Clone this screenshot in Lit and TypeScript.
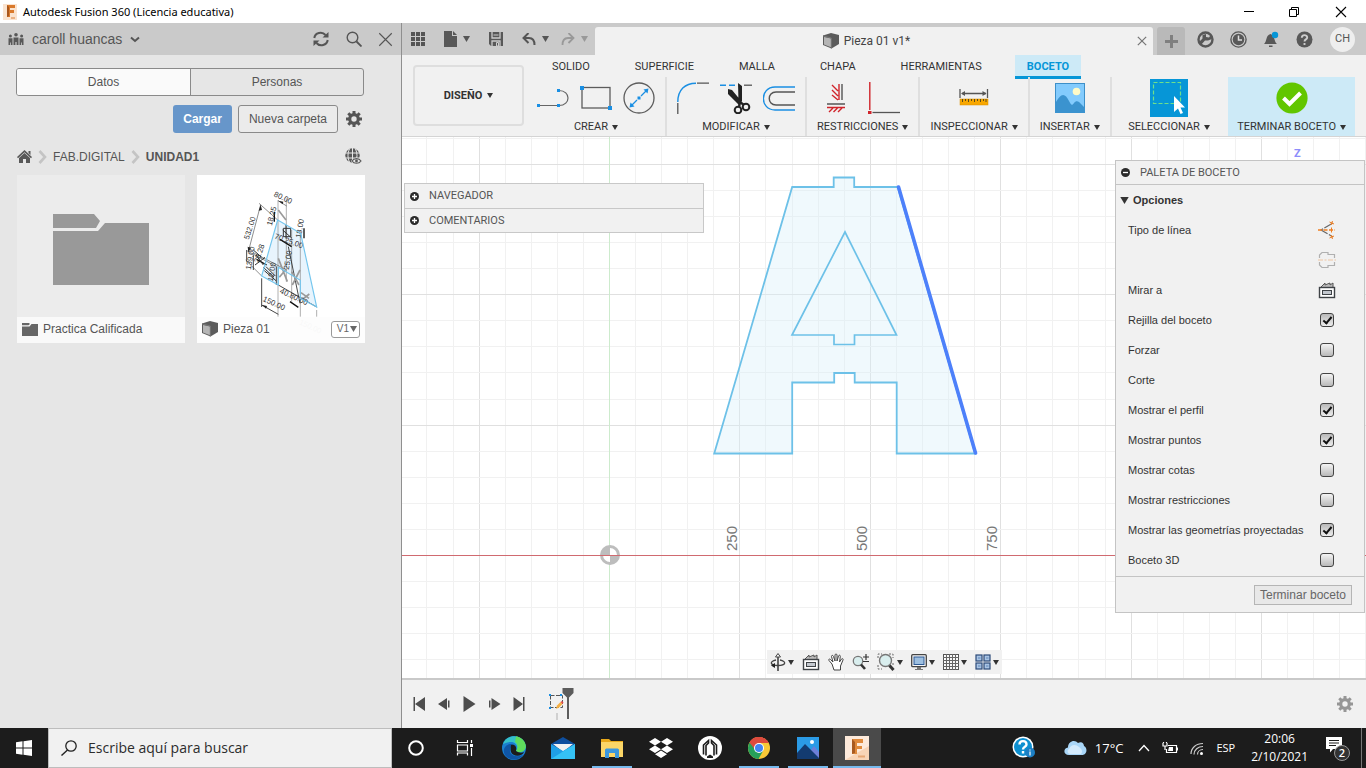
import { LitElement, html, svg, css, nothing } from "lit";
import type { TemplateResult } from "lit";
import { customElement, state } from "lit/decorators.js";
import { classMap } from "lit/directives/class-map.js";

/** Wraps vector content in a fixed-size svg element. */
const icon = (w: number, h: number, body: unknown, box = `0 0 ${w} ${h}`) =>
  html`<svg width=${w} height=${h} viewBox=${box} fill="none" aria-hidden="true">${body}</svg>`;

const caret = (w = 6, h = 5) => icon(w, h, svg`<path d="M0 0H6L3 5Z" fill="currentColor"/>`, "0 0 6 5");

const gear = (size: number) =>
  icon(size, size, svg`
    <circle cx="8" cy="8" r="4.3" stroke="currentColor" stroke-width="3.2"/>
    <g stroke="currentColor" stroke-width="3">
      <path d="M8 0V3M8 13V16M0 8H3M13 8H16M2.3 2.3L4.4 4.4M11.6 11.6L13.7 13.7M2.3 13.7L4.4 11.6M11.6 4.4L13.7 2.3"/>
    </g>`, "0 0 16 16");

const cube = icon(16, 16, svg`
  <path d="M0 2.5L8 0L16 2V11L8.5 15.5L0 12Z" fill="#5c5c5c"/>
  <path d="M1 4L8 5.5V14.3L1 11.5Z" fill="#b5b5b5"/>
  <path d="M0 2.8L8.3 5V15.5" stroke="#777" stroke-width="1"/>`);

const lookAt = icon(18, 18, svg`
  <path d="M3 6L7 2V4L12 2V4L15 2V6" fill="#bbb" stroke="#555" stroke-width="1"/>
  <rect x="1.5" y="6.5" width="15" height="10" fill="#fff" stroke="#3f4347" stroke-width="1.4"/>
  <rect x="4.5" y="9.5" width="9" height="4" fill="#c3c8cf" stroke="#3f4347"/>`);

const fusionLogo = icon(14, 16, svg`
  <rect width="14" height="16" fill="#fae3cf"/>
  <path d="M4 1H12V4H7V6H11V9H7V13H4Z" fill="#d9792b"/>
  <path d="M4 1L6 3V12L4 13Z" fill="#a9561b"/>
  <path d="M8 14H12" stroke="#e6a06a" stroke-width="1.5"/>`);

const people = icon(16, 12, svg`
  <g fill="#585858"><circle cx="8" cy="1.8" r="1.8"/><circle cx="2.4" cy="3" r="1.5"/><circle cx="13.6" cy="3" r="1.5"/>
  <path d="M5.5 4.5H10.5V12H8.6V9H7.4V12H5.5ZM.5 5.3H4.5V12H3V9.5H2.2V12H.5ZM11.5 5.3H15.5V12H13.8V9.5H13V12H11.5Z"/></g>`);

const refresh = icon(18, 16, svg`
  <path d="M2.3 7A6.3 6 0 0 1 13.5 4M15.7 9A6.3 6 0 0 1 4.5 12" stroke="#555" stroke-width="2"/>
  <path d="M16.5 1V6.5H10.5ZM1.5 15V9.5H7.5Z" fill="#555"/>`);

const lens = (size: number, color: string, width: number) =>
  icon(size, size, svg`<circle cx="6.5" cy="6.5" r="5.3" stroke=${color} stroke-width=${width}/>
    <path d="M10.5 10.5L15.5 15.5" stroke=${color} stroke-width=${width + 0.4}/>`, "0 0 16 16");

const cross = (size: number, color: string, width: number) =>
  icon(size, size, svg`<path d="M1 1L11 11M11 1L1 11" stroke=${color} stroke-width=${width}/>`, "0 0 12 12");

const crumbArrow = icon(9, 14, svg`<path d="M1.5 1L7 7L1.5 13" stroke="#c4c4c4" stroke-width="2.6"/>`);

const home = icon(15, 13, svg`
  <path d="M7.5 0L15 7L14 8.2L7.5 2.2L1 8.2L0 7ZM11.5 1H13.5V5L11.5 3Z" fill="#585858"/>
  <path d="M2 8L7.5 3L13 8V13H9V9H6V13H2Z" fill="#585858"/>`);

const globe = icon(17, 17, svg`
  <circle cx="7.5" cy="7.5" r="7.2" fill="#585858"/>
  <path d="M0 5H15M0 10H15M7.5 0V15M4.5 1C2.5 5 2.5 10 4.5 14M10.5 1C12.5 5 12.5 10 10.5 14" stroke="#e7e7e7" stroke-width="1"/>
  <path d="M6 13C8 8.5 15 8.5 17 13C15 17.3 8 17.3 6 13Z" fill="#e7e7e7"/>
  <path d="M7 13C9 9.8 14 9.8 16 13C14 16 9 16 7 13Z" stroke="#585858" stroke-width="1.2"/>
  <circle cx="11.5" cy="13" r="1.4" fill="#585858"/>`);

const bigFolder = icon(96, 72, svg`
  <path d="M0 0H41L47 7L43 14H0ZM0 17H45L52 9H96V71H0Z" fill="#999"/>`);

const smallFolder = icon(16, 13, svg`<path d="M0 0H7L8 1L6.5 2.3H0ZM0 3.5H7.5L9.5 1H16V13H0Z" fill="#666"/>`);

const dim = (x: number, y: number, angle: number, text: string, fill = "#333") =>
  svg`<text transform="translate(${x} ${y}) rotate(${angle})" font-size="23" font-family="Liberation Sans, sans-serif" fill=${fill}>${text}</text>`;

const thumbnail = html`<svg class="thumb" viewBox="591 15 504 504" fill="none" role="img" aria-label="Pieza 01">
  <path d="M833 150L902 190L950 411L901 385V331L835 292V345L785 318Z" fill="#e8f4fd"/>
  <g stroke="#555" stroke-width="2">
    <path d="M834 90V440M859 85V335M875 180V395M901 180V440M950 420V440" stroke="#888"/>
    <path d="M834 92L860 108M782 104L745 245M777 100L833 150M742 243L830 290M760 248L860 300M737 270L785 318"/>
    <path d="M740 240V275M760 255V300M829 290V345M785 325V411M785 405L835 433M865 230L900 400M835 345L950 411" stroke="#222" stroke-width="2.5"/>
    <path d="M823 125V155M912 175V205M840 208L875 230M770 268L800 285M870 395L895 412" stroke="#111" stroke-width="4"/>
    <path d="M835 265L862 335M838 322L856 300M875 305L897 345M877 345L900 300M903 368L927 385M905 390L928 372M835 120L858 150" stroke="#9a9a9a" stroke-width="5"/>
    <path d="M850 175H872V200H850ZM858 165V205M768 255L790 285M765 285L795 262M790 292L822 322M793 302L828 332M798 290L826 318M848 180L876 205M760 240L785 262" stroke="#333" stroke-width="3"/>
  </g>
  <path d="M782 104L776 122L786 120ZM835 92L848 103L850 95ZM745 247L743 230L753 234ZM787 405L798 416L801 408Z" fill="#222"/>
  ${dim(820, 78, 25, "80.00")}${dim(746, 210, -72, "532.00")}${dim(815, 168, -75, "18.25")}
  ${dim(902, 205, -80, "18.00")}${dim(822, 205, 20, "70.25.00")}${dim(752, 300, -80, "139.00")}
  ${dim(866, 300, -80, "25.00")}${dim(787, 392, 25, "150.00")}${dim(838, 368, 25, "40.80.00")}
  ${dim(776, 280, -72, "28.28")}${dim(818, 335, -80, "12.00")}${dim(896, 462, 25, "150.00", "#e4e4e4")}
  <path d="M833 150L902 190L950 411L901 385V331L835 292V345L785 318Z" stroke="#74c6ee" stroke-width="3.5"/>
</svg>`;

const blue = "#1a8fe3";

const lineTool = icon(32, 32, svg`
  <path d="M2 23.5H21M22 8.5C34 8.5 34 23.5 22 23.5" stroke="#666" stroke-width="1.2"/>
  <path d="M0 22H3V25H0ZM20 22H23V25H20ZM20 7H23V10H20Z" fill=${blue}/>`);
const rectTool = icon(32, 32, svg`
  <rect x="2" y="5.5" width="28" height="20.5" stroke="#5c5c5c" stroke-width="1.3"/>
  <path d="M0 4H4V8H0ZM28 24H32V28H28Z" fill=${blue}/>`);
const circleTool = icon(32, 32, svg`
  <circle cx="16" cy="16" r="15" stroke="#5c5c5c" stroke-width="1.3"/>
  <path d="M8 24L14 18M18 14L24 8" stroke=${blue} stroke-width="1.3"/>
  <path d="M6.5 25.5L7.5 20.5L11.5 24.5ZM25.5 6.5L24.5 11.5L20.5 7.5ZM14.5 14.5H17.5V17.5H14.5Z" fill=${blue}/>`);
const filletTool = icon(32, 32, svg`
  <path d="M.8 20C.8 8 8 1.2 19 1.2" stroke=${blue} stroke-width="1.4"/>
  <path d="M.8 21V32M20 1.2H32" stroke="#555" stroke-width="1.3"/>`);
const trimTool = icon(32, 32, svg`
  <path d="M0 3.2H18" stroke=${blue} stroke-width="1.4" stroke-dasharray="6 3"/><path d="M24 3.2H32" stroke="#555" stroke-width="1.3"/>
  <path d="M18 1L22 4V19L18.5 20ZM8 7L12 8L22 20L19 23L8 12Z" fill="#222"/>
  <circle cx="18" cy="28" r="3.3" stroke="#222" stroke-width="2"/><circle cx="26" cy="25" r="3.3" stroke="#222" stroke-width="2"/>
  <path d="M19 25L20 20L24 23" stroke="#222" stroke-width="2.4"/>`);
const offsetTool = icon(32, 32, svg`
  <path d="M32 5H12C-3.5 5 -3.5 28 12 28H32" stroke=${blue} stroke-width="1.4"/>
  <path d="M32 10H13C4 10 4 23 13 23H32" stroke="#555" stroke-width="1.4"/>`);
const fixTool = icon(32, 32, svg`
  <path d="M14 2V18M7 3L13 9M7 8L13 14M7 13L13 18M4 30L8 26M8.500 30L12.500 26M13 30L17 26M2 25.500H20" stroke="#d0242b" stroke-width="1.4"/>
  <path d="M17 2V18M2 22H20" stroke="#555" stroke-width="1.4"/>`);
const cornerTool = icon(32, 32, svg`
  <path d="M1.800 0V28" stroke="#d0242b" stroke-width="1.400"/><path d="M0 29H3.500V32H0Z" fill="#d0242b"/>
  <path d="M4.500 30.500H32" stroke="#555" stroke-width="1.300"/>`);
const measureTool = icon(32, 32, svg`
  <path d="M2 7V16M29.500 7V16M4 11.500H28" stroke="#555" stroke-width="1.300"/>
  <path d="M3 11.500L7 9V14ZM28.500 11.500L24.500 9V14Z" fill="#555"/>
  <rect x="2" y="17" width="28" height="6" fill="#f8a700" stroke="#d98e00" stroke-width=".5"/>
  <path d="M4.500 17V20M7.500 17V19M10.500 17V20M13.500 17V19M16.500 17V20M19.500 17V19M22.500 17V20M25.500 17V19M28 17V20" stroke="#5b4a1c"/>`);
const imageTool = icon(30, 30, svg`
  <rect x=".5" y=".5" width="29" height="29" fill="#83cbfd" stroke="#3d8fc8"/>
  <circle cx="21.500" cy="8.500" r="3.800" fill="#fffbc8"/>
  <path d="M0 21C6 9 10 10 14 18C16 22 17 23 19 20C21 17 24 18 26 21L30 25V30H0Z" fill="#3b93cf"/>`);
const selectTool = icon(38, 38, svg`
  <rect width="38" height="38" fill="#0696d7"/>
  <rect x="3.500" y="3.500" width="27" height="21" stroke="#6fe08a" stroke-width="1.200" stroke-dasharray="4 2"/>
  <path d="M24 17V33L28 29.500L30.500 35L33 34L30.500 28.500H35Z" fill="#fff"/>`);
const finishTool = icon(32, 32, svg`
  <circle cx="16" cy="16" r="15.600" fill="#62c600"/><path d="M7.500 16L13.500 22L24.500 11" stroke="#fff" stroke-width="4"/>`);

const ribbonTabs = ["SOLIDO", "SUPERFICIE", "MALLA", "CHAPA", "HERRAMIENTAS", "BOCETO"];
const ribbonGroups: { label: string; icons: TemplateResult[]; finish?: boolean }[] = [
  { label: "CREAR", icons: [lineTool, rectTool, circleTool] },
  { label: "MODIFICAR", icons: [filletTool, trimTool, offsetTool] },
  { label: "RESTRICCIONES", icons: [fixTool, cornerTool] },
  { label: "INSPECCIONAR", icons: [measureTool] },
  { label: "INSERTAR", icons: [imageTool] },
  { label: "SELECCIONAR", icons: [selectTool] },
  { label: "TERMINAR BOCETO", icons: [finishTool], finish: true },
];

const quickIcons = {
  apps: icon(14, 14, svg`<path d="M0 0H4V4H0ZM5 0H9V4H5ZM10 0H14V4H10ZM0 5H4V9H0ZM5 5H9V9H5ZM10 5H14V9H10ZM0 10H4V14H0ZM5 10H9V14H5ZM10 10H14V14H10Z" fill="#555"/>`),
  file: icon(13, 16, svg`<path d="M0 0H8V5H13V16H0ZM9 0L13 4H9Z" fill="#585858"/>`),
  save: icon(14, 14, svg`<path d="M0 0H14V14H2L0 12Z" fill="#585858"/><path d="M3 0V6H11V0M3 14V9H11V14" stroke="#ccc" stroke-width="1.300"/><path d="M4.500 3H9.500M7.500 10.500H9.500V14H7.500Z" stroke="#ccc"/>`),
  undo: icon(14, 13, svg`<path d="M2 5H7C11 5 12.500 7.500 12.500 12" stroke="#555" stroke-width="2"/><path d="M6.500 0L1.500 5L6.500 10" stroke="#555" stroke-width="2"/>`),
  redo: icon(14, 13, svg`<path d="M12 5H7C3 5 1.500 7.500 1.500 12" stroke="#999" stroke-width="1.800"/><path d="M7.500 0L12.500 5L7.500 10" stroke="#999" stroke-width="1.800"/>`),
};

const statusIcons: [string, TemplateResult][] = [
  ["Extensiones", icon(17, 17, svg`<circle cx="8.500" cy="8.500" r="7" stroke="#585858" stroke-width="2.400"/><path d="M2 11L5.500 7.500V4L9 3V6L12 6.500L14 3.500L15 8L11 9.500H8L4 14Z" fill="#585858"/>`)],
  ["Estado del trabajo", icon(17, 17, svg`<circle cx="8.500" cy="8.500" r="7.600" stroke="#585858" stroke-width="1.400"/><circle cx="8.500" cy="8.500" r="5.800" fill="#585858"/><path d="M8.500 4.500V9H12" stroke="#ddd" stroke-width="1.500"/>`)],
  ["Notificaciones", icon(17, 17, svg`<path d="M1 13C4 11 2.500 4 7.500 3C12 4 11 11 14 13ZM6 14.500H9.500V16H6Z" fill="#585858"/><circle cx="12" cy="4" r="3.200" fill="#0696d7"/>`)],
  ["Ayuda", icon(17, 17, svg`<circle cx="8.500" cy="8.500" r="8" fill="#585858"/><path d="M5.800 6.700C5.800 3.300 11.200 3.300 11.200 6.500C11.200 8.500 8.500 8.300 8.500 10.500M8.500 12V14" stroke="#ccc" stroke-width="1.900"/>`)],
];

const navIcons: [string, TemplateResult, boolean][] = [
  ["Órbita", icon(16, 18, svg`<path d="M8 3V18" stroke="#444" stroke-width="1.600"/><path d="M8 .5L10.500 4H5.500Z" fill="#fff" stroke="#444"/><path d="M6 7C-1 8.500 0 12.500 8 12.500C16 12.500 17 8.500 10 7" stroke="#444" stroke-width="1.300"/><path d="M5 10V15L1 12.500Z" fill="#222"/>`), true],
  ["Mirar a", lookAt, false],
  ["Encuadre", icon(16, 18, svg`<path d="M4 11L1 7.500C0 6 2 5.500 3 7L5 9L3.500 3.500C3.500 2 5 2 5.500 3.500L7 8V2C7 .7 9 .7 9 2V8L10.500 3C11 1.700 12.500 2 12.300 3.500L11.500 9L13.500 6C14.500 5 15.500 6 15 7L12.500 13V17H6Z" fill="#fff" stroke="#444"/>`), false],
  ["Zoom", icon(17, 18, svg`<circle cx="6" cy="8" r="4.700" fill="#d9eeee" stroke="#777" stroke-width="1.300"/><path d="M9 11.500L13 16" stroke="#333" stroke-width="2.600"/><path d="M14 1V7M11 4H17M11 8.500H17" stroke="#333" stroke-width="1.200"/>`), false],
  ["Ajustar", icon(18, 18, svg`<path d="M1 5V1H5M12 1H16V5M1 12V16H5M16 10V13" stroke="#666" stroke-dasharray="2 1.500"/><circle cx="8.500" cy="7.500" r="6" fill="#d9eeee" stroke="#777" stroke-width="1.400"/><path d="M12.500 12.500L16.500 17" stroke="#333" stroke-width="3"/>`), true],
  ["Visualización", icon(16, 18, svg`<rect x=".7" y="1.700" width="14.600" height="12" rx="1" fill="#f6f6f6" stroke="#444" stroke-width="1.300"/><rect x="3" y="4" width="10" height="7.500" fill="#9dbfe0" stroke="#2f5b95"/><path d="M6 14H10V16H12V17H4V16H6Z" fill="#777"/>`), true],
  ["Rejilla", icon(16, 18, svg`<rect x=".5" y="1.500" width="15" height="15" fill="#fff" stroke="#555"/><path d="M3.500 1V17M6.500 1V17M9.500 1V17M12.500 1V17M0 4.500H16M0 7.500H16M0 10.500H16M0 13.500H16" stroke="#666" stroke-width="1.100"/>`), true],
  ["Ventanas", icon(16, 18, svg`<g fill="#a9c4e4" stroke="#2c4a78" stroke-width="1.200"><rect x="1" y="2" width="6" height="6"/><rect x="9" y="2" width="6" height="6"/><rect x="1" y="10" width="6" height="6"/><rect x="9" y="10" width="6" height="6"/></g><path d="M3 5H5.500M11 5H13.500M3 13H5.500M11 13H13.500" stroke="#5f86b8"/>`), true],
];

const playback: [string, string][] = [
  ["Ir al inicio", "M1.500 1V15H3V8L13 15V1L3 8V1Z"],
  ["Paso atrás", "M1 8L10 2V14ZM11 4.500H12.500V11.500H11Z"],
  ["Reproducir", "M1.500 0L13.500 8L1.500 16Z"],
  ["Paso adelante", "M13.500 8L4.500 2V14ZM2 4.500H3.500V11.500H2Z"],
  ["Ir al final", "M1.500 1L11 8V1H12.500V15H11V8L1.500 15Z"],
];

const lineType = icon(18, 18, svg`
  <path d="M15 2L3 9L15 16" stroke="#666" stroke-width="1.200" stroke-dasharray="10 1.500"/>
  <path d="M0 9H17" stroke="#f07f22" stroke-width="1.400" stroke-dasharray="4 1.500"/>
  <path d="M13.500 6.500V11.500M11.500 1L16 3M14.500 0L13 4M11.500 17L16 15M14.500 18L13 14" stroke="#f07f22"/>`);
const centerLine = icon(18, 18, svg`
  <path d="M1.500 7V4L4 1.500H10V3.500H16.500V7M1.500 11V14L4 16.500H10V14.500H16.500V11" stroke="#b0b0b0" stroke-width="1.200"/>
  <path d="M0 9H18" stroke="#f0c6a2" stroke-width="1.200" stroke-dasharray="5 1.500 2 1.500"/>`);

const options: { name: string; checked: boolean }[] = [
  { name: "Rejilla del boceto", checked: true },
  { name: "Forzar", checked: false },
  { name: "Corte", checked: false },
  { name: "Mostrar el perfil", checked: true },
  { name: "Mostrar puntos", checked: true },
  { name: "Mostrar cotas", checked: false },
  { name: "Mostrar restricciones", checked: false },
  { name: "Mostrar las geometrías proyectadas", checked: true },
  { name: "Boceto 3D", checked: false },
];

const toggleDot = (open: boolean) =>
  icon(9, 9, svg`<circle cx="4.500" cy="4.500" r="4.500" fill="#2b2b2b"/><path d=${open ? "M2 4.500H7" : "M2 4.500H7M4.500 2V7"} stroke="#fff" stroke-width="1.300"/>`);

/** Drawing plane: origin marker, 50-unit grid, sketch profile. One grid cell is 26.08 px. */
@customElement("sketch-canvas")
export class SketchCanvas extends LitElement {
  static styles = css`
    :host { display: block; overflow: hidden; background: #fff; }
    svg { display: block; width: 100%; height: 100%; }
    .minor { stroke: #f1f1f1; }
    .major { stroke: #e0e0e0; }
    .tick { font: 15px "Liberation Sans", Arial, sans-serif; fill: #777; }
    .axis { font: bold 11px Roboto, sans-serif; fill: #8d8dfb; }
  `;
  render() {
    const cell = 26.08;
    const range = (a: number, b: number) => Array.from({ length: b - a + 1 }, (_, i) => a + i);
    const ordered = (a: number, b: number) => range(a, b).sort((p, q) => Number(p % 5 === 0) - Number(q % 5 === 0));
    return html`<svg fill="none" role="img" aria-label="Boceto">
      <g transform="translate(208 418)">
        <g shape-rendering="crispEdges">
          ${ordered(-16, 60).map((i) => svg`<path class=${i % 5 ? "minor" : "major"} d="M${i * cell - 0.5} -900V900"/>`)}
          ${ordered(-30, 20).map((i) => svg`<path class=${i % 5 ? "minor" : "major"} d="M-900 ${i * cell + 0.5}H2400"/>`)}
          <path d="M-.5 -900V900" stroke="#cdebcd"/>
        </g>
        <path d="M182.500 -368H224V-377.500H244.500V-368H288L365.500 -101.500H287V-172.500H245V-182H224.500V-172.500H182.500V-101.500H104.500Z"
          transform="translate(-.3 0)" fill="#d9f0fb" fill-opacity=".4" stroke="#6dc1e8" stroke-width="1.800"/>
        <path d="M235 -323L286.500 -220H244.500V-210.500H224V-220H182Z" stroke="#6dc1e8" stroke-width="1.700"/>
        <path d="M288.500 -368L365.500 -102" stroke="#4d80fa" stroke-width="3.600" stroke-linecap="round"/>
        <circle r="8.500" stroke="#bdbdbd" stroke-width="3" fill="#fff"/>
        <path d="M0 0H8V0A8 8 0 0 1 0 8ZM0 0H-8A8 8 0 0 1 0 -8Z" fill="#bdbdbd"/>
        <path d="M-900 .5H2400" stroke="#d06a70" shape-rendering="crispEdges"/>
        ${[250, 500, 750].map((n, i) => svg`<text class="tick" transform="translate(${127 + i * 130} -4) rotate(-90)">${n}</text>`)}
        <text class="axis" x="684" y="-398">Z</text>
      </g>
    </svg>`;
  }
}

@customElement("sketch-palette")
export class SketchPalette extends LitElement {
  static styles = css`
    :host { display: block; box-sizing: border-box; border: 1px solid #c4c4c4; background: #f1f1f1; color: #333;
      font: 11px/16px "Liberation Sans", Arial, sans-serif; }
    .head { display: flex; align-items: center; gap: 10px; height: 23px; padding: 0 5px; border-bottom: 1px solid #c4c4c4;
      font: 11px/16px Roboto, sans-serif; color: #555; }
    .section { display: flex; align-items: center; gap: 4px; height: 30px; padding: 0 4px; font-weight: bold; }
    .row { display: flex; align-items: center; justify-content: space-between; height: 30px; padding: 0 28px 0 12px; }
    .row.blank { justify-content: flex-end; }
    svg { display: block; flex: none; }
    button { border: 0; background: none; padding: 0; margin: 0; font: inherit; color: inherit; }
    input { appearance: none; display: grid; place-items: center; box-sizing: border-box; width: 14px; height: 14px; margin: 0 2px;
      border: 1px solid #444; border-radius: 3px; background: linear-gradient(#f4f4f4, #b9b9b9); }
    input:checked { background: linear-gradient(#b9b9b9, #ededed); }
    input:checked::before { content: ""; width: 3px; height: 7px; border: solid #111; border-width: 0 2px 2px 0;
      transform: rotate(40deg); margin-bottom: 2px; }
    .foot { display: flex; justify-content: flex-end; margin-top: 1px; padding: 8px 12px 7px; border-top: 1px solid #c4c4c4; }
    .foot button { border: 1px solid #b5b5b5; background: #e8e8e8; color: #666; padding: 0 5px; font-size: 12px; line-height: 18px; }
  `;
  render() {
    return html`
      <div class="head">${toggleDot(true)}<span>PALETA DE BOCETO</span></div>
      <div class="section">${caret(9, 7)}<span>Opciones</span></div>
      <div class="row"><span>Tipo de línea</span><button aria-label="Construcción">${lineType}</button></div>
      <div class="row blank"><button aria-label="Línea de centro">${centerLine}</button></div>
      <div class="row"><span>Mirar a</span><button aria-label="Mirar a">${lookAt}</button></div>
      ${options.map((o, i) => html`<div class="row">
        <label for="opt${i}">${o.name}</label><input id="opt${i}" type="checkbox" .checked=${o.checked} /></div>`)}
      <div class="foot"><button>Terminar boceto</button></div>`;
  }
}

@customElement("data-panel")
export class DataPanel extends LitElement {
  static styles = css`
    :host { display: flex; flex-direction: column; box-sizing: border-box; background: #e6e6e6; border-right: 1px solid #8f8f8f;
      color: #555; font: 12px/16px "Liberation Sans", Arial, sans-serif; }
    svg { display: block; flex: none; }
    button { border: 0; background: none; padding: 0; margin: 0; font: inherit; color: inherit; }
    a { color: inherit; text-decoration: none; }
    .head { display: flex; align-items: center; gap: 16px; height: 32px; padding: 0 8px; background: #cacaca; }
    .team { display: flex; align-items: center; gap: 8px; margin-right: auto; font-size: 14px; }
    .body { display: flex; flex-direction: column; padding: 13px 37px 0 16px; }
    .tabs { display: grid; grid-template-columns: 1fr 1fr; border: 1px solid #8a8a8a; border-radius: 3px; overflow: hidden; }
    .tabs button { height: 26px; }
    .tabs button + button { border-left: 1px solid #8a8a8a; }
    .tabs .on { background: #fafafa; }
    .actions { display: flex; align-items: center; justify-content: flex-end; gap: 6px; padding: 9px 2px 0 0; }
    .upload { height: 28px; padding: 0 10px; border-radius: 3px; background: #6796ca; color: #fff; font-weight: bold; }
    .folder { height: 28px; padding: 0 10px; border: 1px solid #8a8a8a; border-radius: 3px; background: #ebebeb; }
    .gear { margin-left: 2px; }
    .crumbs { display: flex; align-items: center; gap: 6px; padding: 15px 2px 10px 1px; }
    .crumbs .globe { margin-left: auto; }
    .cards { display: grid; grid-template-columns: 168px 168px; gap: 12px; padding-left: 1px; }
    .card { display: grid; grid-template-rows: 142px 26px; background: #ececec; }
    .pic { grid-area: 1 / 1; display: grid; place-items: center; padding-top: 7px; }
    .part { background: #fff; }
    .part .pic { grid-area: 1 / 1 / 3 / 2; padding: 0; }
    .thumb { width: 168px; height: 168px; }
    .foot { grid-area: 2 / 1; display: flex; align-items: center; gap: 5px; padding: 0 5px 2px; background: #fdfdfdcc; }
    .version { display: flex; align-items: center; gap: 1px; height: 17px; margin-left: auto; padding: 0 2px 0 5px; border: 1px solid #999;
      border-radius: 3px; background: #fff; font-size: 10px; color: #666; }
  `;
  render() {
    return html`
      <div class="head">
        <button class="team">${people}<span>caroll huancas</span>${icon(10, 7, svg`<path d="M1 1.500L5 5L9 1.500" stroke="#555" stroke-width="2"/>`)}</button>
        <button aria-label="Actualizar">${refresh}</button>
        <button aria-label="Buscar">${lens(16, "#555", 1.4)}</button>
        <button aria-label="Cerrar">${cross(15, "#555", 0.9)}</button>
      </div>
      <div class="body">
        <div class="tabs"><button class="on">Datos</button><button>Personas</button></div>
        <div class="actions">
          <button class="upload">Cargar</button><button class="folder">Nueva carpeta</button>
          <button class="gear" aria-label="Configuración">${gear(16)}</button>
        </div>
        <nav class="crumbs">
          <a href="#" aria-label="Inicio">${home}</a>${crumbArrow}<a href="#">FAB.DIGITAL</a>${crumbArrow}<b>UNIDAD1</b>
          <button class="globe" aria-label="Abrir en la web">${globe}</button>
        </nav>
        <div class="cards">
          <div class="card"><div class="pic">${bigFolder}</div><div class="foot">${smallFolder}<span>Practica Calificada</span></div></div>
          <div class="card part"><div class="pic">${thumbnail}</div>
            <div class="foot">${cube}<span>Pieza 01</span><button class="version">V1${caret(7, 6)}</button></div></div>
        </div>
      </div>`;
  }
}

const taskApps: { name: string; mark: TemplateResult; open?: boolean; active?: boolean }[] = [
  { name: "Cortana", mark: icon(24, 24, svg`<circle cx="12" cy="12" r="6.800" stroke="#fff" stroke-width="2"/>`) },
  { name: "Vista de tareas", mark: icon(24, 24, svg`<path d="M4.500 4V6.500H14.500V4M4.500 19.500V17H14.500V19.500M4.500 9H14.500V15H4.500ZM18.500 4V7M18.500 12V20" stroke="#fff" stroke-width="1.200"/><path d="M17 8H20V11H17Z" fill="#fff"/>`) },
  { name: "Edge", mark: icon(24, 24, svg`<circle cx="12" cy="12" r="12" fill="#1a7fd0"/><path d="M1 8C4 -2 20 -3 23.500 9C25 15 18 18 14 15C17 11 14 6 9 6C5 6 2 8 1 8Z" fill="#35c1c8"/><path d="M14 .3C20 1 25 7 23.500 12C22 17 16 17 14 15C17 11 15 7 13 6Z" fill="#5fdc5c"/><path d="M8 13C7 19 13 22 21 19C17 25 7 25 3 19C0 14 3 9 8 8C11 8 12 9 12 10C10 10 8.500 11 8 13Z" fill="#0f55a5"/><path d="M9 9C13 8 15 11 14 15C17 17 20 17 22 16C20 21 11 21 9 16C8 13 9 11 9 9Z" fill="#1c1c1c"/>`) },
  { name: "Correo", mark: icon(24, 24, svg`<path d="M0 8L12 1L24 8V12H0Z" fill="#0f4f9e"/><path d="M2 8H22L12 16Z" fill="#f2f2f2"/><path d="M0 8L12 15L24 8V23H0Z" fill="#1f9fe6"/><path d="M0 23L24 8V23Z" fill="#35c2f5"/>`) },
  { name: "Explorador", open: true, mark: icon(24, 24, svg`<path d="M1 3H9L11 5H23V20H1Z" fill="#e9a91a"/><path d="M1 6H23V21H1Z" fill="#fbd667"/><path d="M5 22V14C5 13 6 12.500 7 12.500H17C18 12.500 19 13 19 14V22H15V17H9V22Z" fill="#3c98dd"/>`) },
  { name: "Dropbox", mark: icon(24, 24, svg`<path d="M6 2L12 5.700L6 9.500L0 5.700ZM18 2L24 5.700L18 9.500L12 5.700ZM6 9.500L12 13.300L6 17L0 13.300ZM18 9.500L24 13.300L18 17L12 13.300ZM12 14.500L18 18.300L12 22L6 18.300Z" fill="#fff"/>`) },
  { name: "Lector", mark: icon(24, 24, svg`<circle cx="12" cy="12" r="12" fill="#fff"/><path d="M5.500 18.500V9L10.500 4.500V7L8 9.500V19.500M18.500 18.500V9L13.500 4.500V7L16 9.500V19.500" stroke="#1c1c1c" stroke-width="1.600"/><path d="M9 22V20.500L12 18.500L15 20.500V22" fill="#1c1c1c"/>`) },
  { name: "Chrome", open: true, mark: icon(24, 24, svg`<circle cx="12" cy="12" r="11" fill="#f8c937"/><path d="M12 12L2.500 6.500A11 11 0 0 1 21.700 7H12Z" fill="#dd4b3e"/><path d="M12 12L2.500 6.500A11 11 0 0 0 11.500 23L16 15Z" fill="#26a05a"/><path d="M12 7H21.700A11 11 0 0 0 2.500 6.500L7.500 13Z" fill="#dd4b3e"/><circle cx="12" cy="12" r="5" fill="#fff"/><circle cx="12" cy="12" r="4" fill="#4285f4"/>`) },
  { name: "Fotos", open: true, mark: icon(24, 24, svg`<rect x="1" y="1" width="22" height="22" fill="#2b9be6"/><path d="M14 15L18 10L23 16V23H14Z" fill="#6d7fd8"/><path d="M1 17L9 8L23 22V23H1Z" fill="#133b70"/><circle cx="16" cy="6" r="2" fill="#fff"/>`) },
  { name: "Fusion 360", open: true, active: true, mark: icon(24, 24, svg`<rect width="24" height="24" fill="#fdeadb"/><path d="M10 18L24 10V24H0Z" fill="#f8d4b6"/><path d="M7 3H18V7H12V10H17V13H12V18H7Z" fill="#e08a3c"/><path d="M7 3L10 6V17L7 18Z" fill="#a85a20"/><path d="M13 20.500H20" stroke="#e7a774" stroke-width="2"/>`) },
];

@customElement("task-bar")
export class TaskBar extends LitElement {
  static styles = css`
    :host { display: flex; align-items: stretch; height: 40px; background: #1c1c1c; color: #fff; font: 12px/18px "Open Sans", "Noto Sans", sans-serif; }
    svg { display: block; flex: none; }
    button { border: 0; background: none; padding: 0; margin: 0; font: inherit; color: inherit; display: grid; place-items: center; }
    .start { width: 48px; }
    .search { display: flex; align-items: center; gap: 11px; box-sizing: border-box; width: 344px; padding: 0 12px;
      border: 1px solid #bdbdbd; background: #f1f1f1; }
    .search input { flex: 1; min-width: 0; border: 0; padding: 0; background: none; outline: none; font: 14px/20px "Open Sans", "Noto Sans", sans-serif; }
    .search input::placeholder { color: #2c2c2c; opacity: 1; }
    .apps { display: flex; gap: 1px; }
    .app { width: 48px; box-sizing: border-box; padding-top: 2px; align-content: space-between; grid-template-rows: 36px 2px; }
    .line { width: 40px; height: 2px; }
    .open .line { background: #76b9ed; }
    .active { background: #4a4a4a; }
    .active .line { width: 48px; }
    .tray { display: flex; align-items: center; gap: 12px; margin-left: auto; padding-right: 4px; }
    .weather { display: flex; gap: 8px; margin: 0 3px 0 16px; }
    .weather span { font-size: 13px; }
    .clock { display: block; text-align: center; margin-left: 4px; }
    .clock time { display: block; }
    .notes { margin: 0 -2px 0 6px; }
    .peek { width: 1px; align-self: stretch; background: #777; }
    .lang { font-size: 11px; }
  `;
  render() {
    return html`
      <button class="start" aria-label="Inicio">${icon(16, 16, svg`<path d="M0 2.200L6.500 1.300V7.500H0ZM7.500 1.200L16 0V7.500H7.500ZM0 8.500H6.500V14.700L0 13.800ZM7.500 8.500H16V16L7.500 14.800Z" fill="#fff"/>`)}</button>
      <label class="search">${icon(16, 16, svg`<circle cx="10" cy="6" r="5.200" stroke="#222" stroke-width="1.300"/><path d="M6.500 10L.5 15.500" stroke="#222" stroke-width="1.400"/>`)}
        <input type="text" aria-label="Buscar" placeholder="Escribe aquí para buscar" /></label>
      <div class="apps">${taskApps.map((a) => html`
        <button class=${classMap({ app: true, open: !!a.open, active: !!a.active })} aria-label=${a.name}>${a.mark}<span class="line"></span></button>`)}
      </div>
      <div class="tray">
        <button aria-label="Ayuda">${icon(24, 24, svg`<circle cx="11" cy="11" r="10.500" fill="#fff"/><circle cx="11" cy="11" r="9" fill="#0d8fd0"/><path d="M7.500 8.500C7.500 4 14.500 4 14.500 8.500C14.500 11 11 10.500 11 13.500M11 15V17.500" stroke="#fff" stroke-width="2.400"/><circle cx="18" cy="16.500" r="5" fill="#1c7fc4"/><path d="M18 13.500V14.500M18 15.500V19.500" stroke="#fff" stroke-width="1.200"/>`)}</button>
        <button class="weather">${icon(23, 16, svg`<path d="M5 15C-1 15 -1 8 4 7.500C4 1 11 -1 14 3C18 1 20 4 20 6C24 8 23 15 18 15Z" fill="#a9d6f8"/><path d="M5 9C7 4 12 4 15 7C18 9 19 12 17 14H6C3 13 3 10 5 9Z" fill="#d4ebfd"/>`)}<span>17°C</span></button>
        <button aria-label="Iconos ocultos">${icon(12, 8, svg`<path d="M1 7L6 1.500L11 7" stroke="#fff" stroke-width="1.300"/>`)}</button>
        <button aria-label="Batería">${icon(16, 12, svg`<path d="M6 3.500H14.500V10.500H4.500V7M15.500 5.500V8.500M1 1V4H5V1M3 4V8M1.500 0V1M4.500 0V1" stroke="#fff" stroke-width="1.200"/><path d="M7 5H11V9H6Z" fill="#fff"/>`)}</button>
        <button aria-label="Red">${icon(14, 13, svg`<path d="M1 12C1 6 6 1.500 13 1.500M4 12.500C4 8 8 4.500 13 4.500M7.500 12.500C7.500 10 9.500 7.500 13 7.500" stroke="#ccc" stroke-width="1.200"/><circle cx="11.500" cy="11.500" r="1.500" fill="#fff"/>`)}</button>
        <button class="lang">ESP</button>
        <button class="clock"><time>20:06</time><time>2/10/2021</time></button>
        <button class="notes" aria-label="2 notificaciones">${icon(25, 26, svg`<g transform="translate(0 1)"><path d="M0 1H16V13H7L4 16.500V13H0Z" fill="#fff"/><path d="M3 4.500H13M3 7H13M3 9.500H10" stroke="#1c1c1c" stroke-width="1.200"/><circle cx="16" cy="17" r="7.500" fill="#333" stroke="#999"/><text x="16" y="21" text-anchor="middle" font-size="11" font-family="Open Sans, sans-serif" font-weight="600" fill="#fff">2</text></g>`)}</button>
        <span class="peek"></span>
      </div>`;
  }
}

@customElement("app-root")
export class AppRoot extends LitElement {
  @state() private tab = "BOCETO";

  static styles = css`
    :host { display: flex; flex-direction: column; height: 100vh; overflow: hidden; background: #f1f1f1; color: #333;
      font: 11px/16px Roboto, "Liberation Sans", sans-serif; }
    svg { display: block; flex: none; }
    button { border: 0; background: none; padding: 0; margin: 0; font: inherit; color: inherit; display: flex; align-items: center; justify-content: center; white-space: nowrap; }
    .title { display: flex; align-items: center; gap: 6px; height: 23px; padding: 0 19px 0 3px; background: #fff; color: #000;
      font: 11px/16px "Noto Sans", "Open Sans", sans-serif; }
    .title .win { display: flex; gap: 35px; margin-left: auto; }
    .main { flex: 1; min-height: 0; display: flex; }
    data-panel { flex: none; width: 402px; }
    .work { flex: 1; min-width: 0; display: flex; flex-direction: column; }

    .bar { display: flex; align-items: stretch; height: 32px; background: #cacaca; color: #555; }
    .quick { display: flex; align-items: center; gap: 19px; padding: 0 7px 0 9px; }
    .quick button { gap: 6px; }
    .quick .off { color: #999; }
    .quick .redo { margin-left: -7px; }
    .doc { flex: 1; display: flex; align-items: center; justify-content: center; gap: 5px; margin-top: 4px; padding: 0 6px; border-radius: 3px 3px 0 0;
      background: #f1f1f1; color: #444; font: 12px/16px Roboto, sans-serif; }
    .doc .name { display: flex; gap: 5px; margin: 0 auto; }
    .add { width: 28px; margin: 4px 0 0 4px; border-radius: 3px 3px 0 0; background: #b9b9b9; }
    .status { display: flex; align-items: center; gap: 16px; padding: 0 11px 0 12px; }
    .avatar { width: 25px; height: 25px; margin-left: 1px; border-radius: 50%; background: #eee; }

    .ribbon { display: flex; height: 81px; border-bottom: 1px solid #d4d4d4; }
    .space { box-sizing: border-box; width: 111px; height: 61px; margin: 10px 3px 0 11px; gap: 5px; border: 2px solid #dedede; border-radius: 4px; font-weight: bold; }
    .tools { flex: 1; display: flex; flex-direction: column; }
    .tabs { display: flex; gap: 21px; height: 24px; padding-left: 13px; }
    .tabs button { box-sizing: border-box; padding: 0 12px; }
    .tabs .on { padding-top: 3px; background: #cdeaf7; color: #0696d7; border-bottom: 3px solid #0696d7; font-weight: bold; }
    .groups { display: flex; margin-top: -2px; height: 59px; }
    .group { display: flex; flex-direction: column; justify-content: space-between; padding: 3px 10px 1px; border-right: 2px solid #dfdfdf; }
    .group .icons { display: flex; align-items: center; justify-content: center; gap: 11px; height: 36px; }
    .group.plain { flex: 1; border-right-color: transparent; }
    .group.finish { margin-right: 11px; padding: 3px 9px 1px; border: 0; background: #cdeaf7; }
    .caption { gap: 4px; }

    .stage { flex: 1; min-height: 0; position: relative; display: flex; }
    sketch-canvas { flex: 1; }
    sketch-palette { position: absolute; top: 23px; right: 1px; width: 250px; }
    .browser { position: absolute; top: 46px; left: 2px; width: 300px; box-sizing: border-box; border: 1px solid #c8c8c8; background: #f1f1f1; color: #555; }
    .browser button { width: 100%; height: 24px; padding: 0 5px; justify-content: flex-start; gap: 10px; }
    .browser button + button { border-top: 1px solid #c8c8c8; }
    .navbar { position: absolute; left: 0; right: 0; bottom: 4px; display: flex; justify-content: center; }
    .nav { display: flex; gap: 8px; height: 24px; padding: 0 3px; background: #f1f1f1; }
    .nav button { gap: 2px; }

    .timeline { display: flex; align-items: center; height: 48px; padding: 0 13px 0 10px; border-top: 2px solid #c9c9c9; }
    .play { display: flex; gap: 11px; margin-right: 22px; color: #4d4d4d; }
    .timeline .cfg { margin-left: auto; color: #969696; }
  `;

  private ribbon() {
    return html`<div class="ribbon">
      <button class="space"><span>DISEÑO</span>${caret()}</button>
      <div class="tools">
        <div class="tabs" role="tablist">
          ${ribbonTabs.map((t) => html`<button role="tab" class=${classMap({ on: t === this.tab })} @click=${() => (this.tab = t)}>${t}</button>`)}
        </div>
        <div class="groups">
          ${ribbonGroups.map((g) => html`<div class=${classMap({ group: true, finish: !!g.finish, plain: g.label === "SELECCIONAR" })}>
            <div class="icons">${g.icons.map((i) => html`<button aria-label=${g.label}>${i}</button>`)}</div>
            <button class="caption"><span>${g.label}</span>${caret()}</button>
          </div>`)}
        </div>
      </div>
    </div>`;
  }

  render() {
    return html`
      <header class="title">${fusionLogo}<span>Autodesk Fusion 360 (Licencia educativa)</span>
        <div class="win">
          <button aria-label="Minimizar">${icon(10, 12, svg`<path d="M0 5.500H10" stroke="#000"/>`)}</button>
          <button aria-label="Restaurar">${icon(11, 12, svg`<path d="M.5 3.500H7.500V10.500H.5ZM2.500 3.500V1.500H9.500V8.500H7.500" stroke="#000"/>`)}</button>
          <button aria-label="Cerrar">${cross(12, "#000", 1.1)}</button>
        </div>
      </header>
      <div class="main">
        <data-panel></data-panel>
        <section class="work">
          <div class="bar">
            <div class="quick">
              <button aria-label="Panel de datos">${quickIcons.apps}</button>
              <button aria-label="Archivo">${quickIcons.file}${caret(7, 6)}</button>
              <button aria-label="Guardar">${quickIcons.save}</button>
              <button aria-label="Deshacer">${quickIcons.undo}${caret(7, 6)}</button>
              <button class="off redo" aria-label="Rehacer">${quickIcons.redo}${caret(7, 6)}</button>
            </div>
            <div class="doc"><div class="name">${cube}<span>Pieza 01 v1*</span></div><button aria-label="Cerrar documento">${cross(10, "#777", 1.5)}</button></div>
            <button class="add" aria-label="Nuevo diseño">${icon(13, 13, svg`<path d="M6.500 0V13M0 6.500H13" stroke="#808080" stroke-width="3"/>`)}</button>
            <div class="status">
              ${statusIcons.map(([n, i]) => html`<button aria-label=${n}>${i}</button>`)}
              <button class="avatar">CH</button>
            </div>
          </div>
          ${this.ribbon()}
          <div class="stage">
            <sketch-canvas></sketch-canvas>
            <div class="browser"><button>${toggleDot(false)}<span>NAVEGADOR</span></button><button>${toggleDot(false)}<span>COMENTARIOS</span></button></div>
            <sketch-palette></sketch-palette>
            <div class="navbar"><div class="nav">
              ${navIcons.map(([n, i, menu]) => html`<button aria-label=${n}>${i}${menu ? caret() : nothing}</button>`)}
            </div></div>
          </div>
          <footer class="timeline">
            <div class="play">${playback.map(([n, d]) => html`<button aria-label=${n}>${icon(14, 16, svg`<path d=${d} fill="currentColor"/>`)}</button>`)}</div>
            ${icon(28, 34, svg`<path d="M2.500 8.500H14.500V20.500H2.500Z" stroke="#555" stroke-dasharray="4 1.500"/><path d="M1 7H3V9H1ZM12 7H14V9H12ZM1 20H3V22H1Z" fill="#1a8fe3"/><path d="M8 22L9 18.500L12.500 15L14.500 17L11 20.500Z" fill="#f6b042"/><path d="M12.500 15L14 14L15.500 15.500L14.500 17Z" fill="#e54848"/><path d="M9 26V33" stroke="#c4c4c4" stroke-width="1.500"/><path d="M14.500 1H25.500V6L21 10.500V32H19V10.500L14.500 6Z" fill="#5c5c5c"/>`)}
            <button class="cfg" aria-label="Preferencias">${gear(16)}</button>
          </footer>
        </section>
      </div>
      <task-bar></task-bar>`;
  }
}
